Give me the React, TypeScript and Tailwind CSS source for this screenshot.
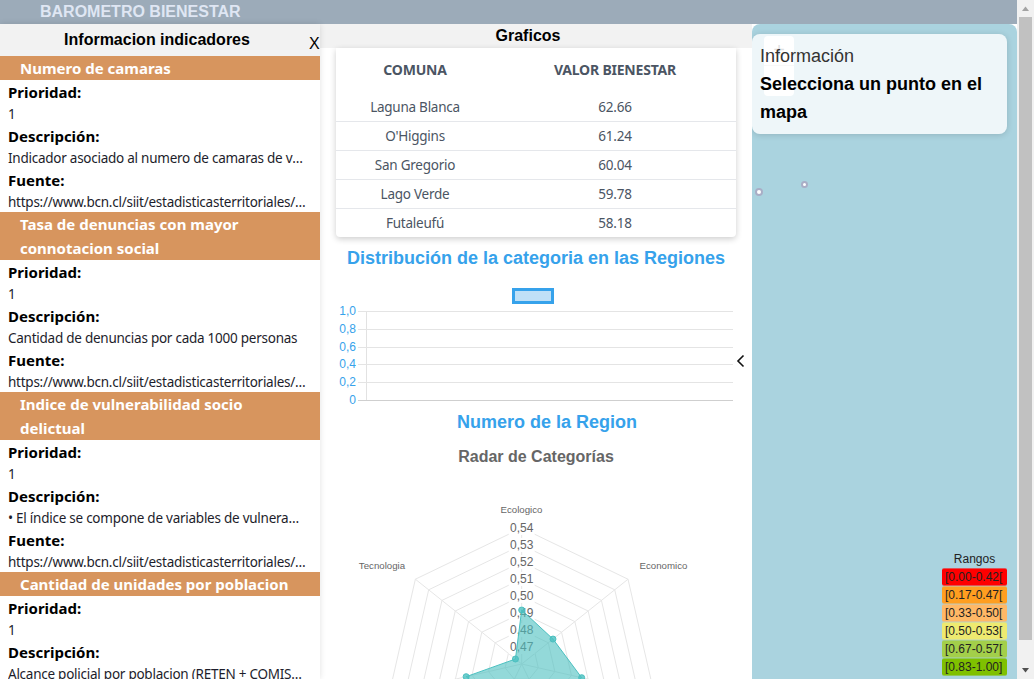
import { ReactNode } from "react";

const indicators = [
  {
    title: "Numero de camaras",
    desc: "Indicador asociado al numero de camaras de vigilancia por comuna en el territorio",
  },
  {
    title: "Tasa de denuncias con mayor connotacion social",
    desc: "Cantidad de denuncias por cada 1000 personas",
  },
  {
    title: "Indice de vulnerabilidad socio delictual",
    desc: "• El índice se compone de variables de vulnerabilidad social y delictual de la comuna",
  },
  {
    title: "Cantidad de unidades por poblacion",
    desc: "Alcance policial por poblacion (RETEN + COMISARIA + SUBCOMISARIA + TENENCIA)",
  },
];

const url = "https://www.bcn.cl/siit/estadisticasterritoriales/resultados-consulta?id=1";

const comunas = [
  ["Laguna Blanca", "62.66"],
  ["O'Higgins", "61.24"],
  ["San Gregorio", "60.04"],
  ["Lago Verde", "59.78"],
  ["Futaleufú", "58.18"],
];

const ranges = [
  ["[0.00-0.42[", "bg-[#ff0000]"],
  ["[0.17-0.47[", "bg-[#ff9e20]"],
  ["[0.33-0.50[", "bg-[#ffb866]"],
  ["[0.50-0.53[", "bg-[#eeea70]"],
  ["[0.67-0.57[", "bg-[#a3cf4a]"],
  ["[0.83-1.00]", "bg-[#7fc000]"],
];

function Label({ children }: { children: ReactNode }) {
  return <div className="h-[22px] pt-[1px] text-[15px] leading-[23px] font-bold text-black">{children}</div>;
}

function Value({ children }: { children: ReactNode }) {
  return (
    <div className="h-[22px] truncate pr-[14px] text-[13.5px] leading-[25px] tracking-[-0.25px] text-[#1d1d2b]">
      {children}
    </div>
  );
}

function IndicatorsPanel() {
  return (
    <aside className="relative z-10 w-[320px] shrink-0 overflow-hidden bg-white shadow-[0_0_6px_rgba(0,0,0,0.12)]">
      <div className="h-8 bg-[#f2f2f2] pr-[6px] text-center font-['Liberation_Sans'] text-[16px] leading-[31px] font-bold text-black">
        Informacion indicadores
      </div>
      {indicators.map((item) => (
        <section key={item.title}>
          <h3 className="bg-[#d7955e] pr-5 pl-5 text-[15px] leading-6 font-bold text-white">{item.title}</h3>
          <div className="pl-2">
            <Label>Prioridad:</Label>
            <Value>1</Value>
            <Label>Descripción:</Label>
            <Value>{item.desc}</Value>
            <Label>Fuente:</Label>
            <Value>{url}</Value>
          </div>
        </section>
      ))}
    </aside>
  );
}

function ComunaTable() {
  return (
    <div className="w-[400px] rounded-b bg-white text-[#4b5563] shadow-[0_2px_6px_rgba(0,0,0,0.2)]">
      <div className="grid h-[45px] grid-cols-[158px_1fr] items-center pb-[2px] text-center text-[14px] font-bold tracking-[-0.2px]">
        <div>COMUNA</div>
        <div>VALOR BIENESTAR</div>
      </div>
      {comunas.map(([name, value], i) => (
        <div
          key={name}
          className={`grid grid-cols-[158px_1fr] items-center text-center text-[13.5px] tracking-[-0.25px] ${
            i < comunas.length - 1 ? "h-[29px] border-b border-[#e5e7eb]" : "h-[28px]"
          }`}
        >
          <div>{name}</div>
          <div>{value}</div>
        </div>
      ))}
    </div>
  );
}

function BarChart() {
  const ticks = ["1,0", "0,8", "0,6", "0,4", "0,2", "0"];
  const ys = [311, 329, 347, 364, 382, 400];
  return (
    <svg width={432} height={125} viewBox="320 280 432 125" className="block font-['Liberation_Sans'] font-normal">
      <rect x={513.5} y={289.5} width={39} height={13} fill="#bfe0f7" stroke="#36a2eb" strokeWidth={3} />
      <line x1={366.5} y1={311} x2={366.5} y2={401} stroke="#e2e2e2" />
      {ticks.map((t, i) => (
        <g key={t}>
          <line x1={358} y1={ys[i] + 0.5} x2={733} y2={ys[i] + 0.5} stroke={i === 5 ? "#cfcfcf" : "#e4e4e4"} />
          <text x={356} y={ys[i] + 3.5} textAnchor="end" fontSize={12} fill="#36a2eb">
            {t}
          </text>
        </g>
      ))}
    </svg>
  );
}

function RadarChart() {
  const cx = 521.7;
  const cy = 664;
  const step = 17;
  const point = (axis: number, r: number) => {
    const a = (axis * 2 * Math.PI) / 7;
    return [cx + r * Math.sin(a), cy - r * Math.cos(a)];
  };
  const axes = [0, 1, 2, 3, 4, 5, 6];
  const rings = [1, 2, 3, 4, 5, 6, 7, 8];
  const tickLabels = ["0,47", "0,48", "0,49", "0,50", "0,51", "0,52", "0,53", "0,54"];
  const values = [54, 40, 61.5, 50, 45, 57, 8];
  const shape = values.map((r, i) => point(i, r));
  return (
    <svg width={432} height={189} viewBox="320 490 432 189" className="block font-['Liberation_Sans'] font-normal">
      {rings.map((ring) => (
        <polygon
          key={ring}
          points={axes.map((i) => point(i, ring * step).join(",")).join(" ")}
          fill="none"
          stroke="#e6e6e6"
        />
      ))}
      {axes.map((i) => {
        const [x, y] = point(i, 136);
        return <line key={i} x1={cx} y1={cy} x2={x} y2={y} stroke="#e6e6e6" />;
      })}
      {tickLabels.map((label, i) => {
        const y = cy - (i + 1) * step;
        return (
          <g key={label}>
            <rect x={cx - 13} y={y - 7} width={26} height={14} fill="#fff" />
            <text x={cx} y={y + 4} textAnchor="middle" fontSize={12} fill="#666">
              {label}
            </text>
          </g>
        );
      })}
      <text x={521.5} y={513} textAnchor="middle" fontSize={9.7} fill="#666">
        Ecologico
      </text>
      <text x={663.5} y={569} textAnchor="middle" fontSize={9.7} fill="#666">
        Economico
      </text>
      <text x={382} y={569} textAnchor="middle" fontSize={9.7} fill="#666">
        Tecnologia
      </text>
      <polygon
        points={shape.map((p) => p.join(",")).join(" ")}
        fill="rgba(75,192,192,0.6)"
        stroke="#4bc0c0"
      />
      {shape.map(([x, y], i) => (
        <circle key={i} cx={x} cy={y} r={3} fill="rgba(75,192,192,0.8)" stroke="#4bc0c0" />
      ))}
    </svg>
  );
}

function ChartsPanel() {
  return (
    <main className="relative w-[432px] shrink-0 overflow-hidden bg-white">
      <div className="h-6 bg-[#f2f2f2] pr-4 text-center font-['Liberation_Sans'] text-[16px] leading-[23px] font-bold text-black">
        Graficos
      </div>
      <div className="pl-4">
        <ComunaTable />
      </div>
      <div className="font-['Liberation_Sans'] font-bold">
        <h2 className="mt-[11px] w-[432px] text-center text-[18px] leading-5 text-[#36a2eb]">
          Distribución de la categoria en las Regiones
        </h2>
        <div className="mt-3">
          <BarChart />
        </div>
        <h2 className="mt-[7px] pl-[22px] text-center text-[18px] leading-5 text-[#36a2eb]">Numero de la Region</h2>
        <h2 className="mt-[15px] text-center text-[16px] leading-5 text-[#666666]">Radar de Categorías</h2>
        <div className="mt-[23px]">
          <RadarChart />
        </div>
      </div>
      <svg width={10} height={14} viewBox="0 0 10 14" className="absolute top-[330px] left-[416px]" fill="none">
        <path d="M7.5 1.5 2 7l5.5 5.5" stroke="#111" strokeWidth={1.6} />
      </svg>
    </main>
  );
}

function MapPanel() {
  return (
    <div className="relative w-[265px] shrink-0 overflow-hidden rounded-t-lg bg-[#aad3df] font-['Liberation_Sans']">
      {/* zoom control sits under the info card */}
      <div className="absolute top-3 left-3 h-[60px] w-[30px] rounded-sm bg-white">
        <div className="h-[30px] border-b border-[#dddddd] text-center text-[20px] leading-[28px] text-[#666666]">+</div>
      </div>
      <div className="absolute top-[164px] left-[3px] h-2 w-2 rounded-full border-2 border-[#a9aec6] bg-white" />
      <div className="absolute top-[157px] left-[49px] h-[7px] w-[7px] rounded-full border-2 border-[#a9aec6] bg-white" />

      <div className="absolute top-[10px] left-0 h-[100px] w-[255px] rounded-lg bg-white/80 px-2 pt-2 shadow-[0_1px_6px_rgba(0,0,0,0.15)]">
        <div className="text-[18px] leading-7 text-[#333333]">Información</div>
        <div className="text-[18px] leading-7 font-bold text-black">Selecciona un punto en el mapa</div>
      </div>

      <div className="absolute right-[10px] bottom-[3px] w-[65px] text-[12px] text-[#222222]">
        <div className="h-[17px] text-center leading-[17px]">Rangos</div>
        {ranges.map(([label, color]) => (
          <div key={label} className={`h-[18px] rounded-[2px] border-y border-[#aad3df]/40 pl-[3px] leading-[16px] ${color}`}>
            {label}
          </div>
        ))}
      </div>
    </div>
  );
}

function PageScrollbar() {
  return (
    <div className="flex w-[17px] shrink-0 flex-col items-center bg-[#f1f1f1]">
      <svg width={9} height={17} viewBox="0 0 9 17">
        <path d="M1 11 4.5 6.5 8 11z" fill="#a3a3a3" />
      </svg>
      <div className="h-[623px] w-[13px] bg-[#c1c1c1]" />
      <div className="flex-1" />
      <svg width={9} height={17} viewBox="0 0 9 17">
        <path d="M1 6 4.5 10.5 8 6z" fill="#505050" />
      </svg>
    </div>
  );
}

export default function App() {
  return (
    <div className="flex h-[679px] w-[1034px] overflow-hidden bg-white font-['Noto_Sans',sans-serif]">
      <div className="flex w-[1017px] shrink-0 flex-col">
        <header className="h-6 shrink-0 bg-[#9cabb9] pl-10 font-['Liberation_Sans'] text-[16px] leading-[23px] font-bold text-[#dfe6f3]">
          BAROMETRO BIENESTAR
        </header>
        <div className="relative flex min-h-0 flex-1">
          <IndicatorsPanel />
          <ChartsPanel />
          <MapPanel />
          <div className="absolute top-[11px] left-[309px] z-20 font-['Liberation_Sans'] text-[16px] leading-[18px] text-black">
            X
          </div>
        </div>
      </div>
      <PageScrollbar />
    </div>
  );
}
